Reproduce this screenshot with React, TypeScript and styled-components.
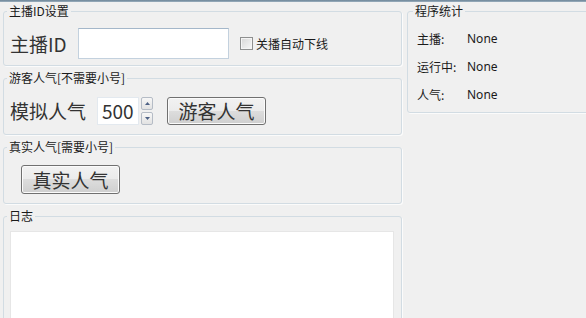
import React from 'react';
import styled, { createGlobalStyle } from 'styled-components';

const GlobalStyle = createGlobalStyle`
  html, body {
    margin: 0;
    padding: 0;
    background: #f0f0f0;
    overflow: hidden;
  }
  body {
    font-family: "Noto Sans CJK SC", "Noto Sans", sans-serif;
    color: #1e1e1e;
  }
`;

export default function App() {
  return (
    <Window>
      <GlobalStyle />
      <TitleStrip />
      <Body>
        <LeftColumn>
          <Group $h={63}>
            <Legend>主播ID设置</Legend>
            <Row $pt={9}>
              <BigLabel $w={68}>主播ID</BigLabel>
              <TextInput defaultValue="" />
              <CheckLabel>
                <CheckBox />
                关播自动下线
              </CheckLabel>
            </Row>
          </Group>

          <Group $h={65}>
            <Legend>游客人气[不需要小号]</Legend>
            <Row $pt={11}>
              <BigLabel $w={87}>模拟人气</BigLabel>
              <SpinBox>500</SpinBox>
              <SpinArrows>
                <SpinButton>
                  <svg width="5" height="3" viewBox="0 0 5 3">
                    <path d="M0 3 L2.5 0 L5 3 Z" fill="#4d6185" />
                  </svg>
                </SpinButton>
                <SpinButton>
                  <svg width="5" height="3" viewBox="0 0 5 3">
                    <path d="M0 0 L5 0 L2.5 3 Z" fill="#4d6185" />
                  </svg>
                </SpinButton>
              </SpinArrows>
              <Button $ml={14} $h={28}>游客人气</Button>
            </Row>
          </Group>

          <Group $h={65}>
            <Legend>真实人气[需要小号]</Legend>
            <Row $pt={10}>
              <Button $ml={11} $h={29}>真实人气</Button>
            </Row>
          </Group>

          <Group $h={130}>
            <Legend>日志</Legend>
            <LogArea />
          </Group>
        </LeftColumn>

        <RightColumn>
          <Group $h={110}>
            <Legend $ml={-1}>程序统计</Legend>
            <Stats>
              <StatRow>
                <StatLabel>主播:</StatLabel>
                <StatValue>None</StatValue>
              </StatRow>
              <StatRow>
                <StatLabel>运行中:</StatLabel>
                <StatValue>None</StatValue>
              </StatRow>
              <StatRow>
                <StatLabel>人气:</StatLabel>
                <StatValue>None</StatValue>
              </StatRow>
            </Stats>
          </Group>
        </RightColumn>
      </Body>
    </Window>
  );
}

const Window = styled.div`
  width: 592px;
  height: 318px;
  overflow: hidden;
  display: flex;
  flex-direction: column;
  background: #f0f0f0;
`;

const TitleStrip = styled.div`
  height: 2px;
  flex-shrink: 0;
  background: linear-gradient(#6b8396, #9cb0bf);
`;

const Body = styled.div`
  display: flex;
  gap: 5px;
  padding: 1px 0 0 3px;
  flex: 1;
  min-height: 0;
`;

const LeftColumn = styled.div`
  width: 399px;
  flex-shrink: 0;
  display: flex;
  flex-direction: column;
  gap: 4px;
`;

const RightColumn = styled.div`
  flex: 1;
  display: flex;
  flex-direction: column;
`;

const Group = styled.fieldset<{ $h: number }>`
  margin: 0;
  padding: 0 6px;
  min-width: 0;
  height: ${p => p.$h}px;
  flex-shrink: 0;
  box-sizing: border-box;
  border: 1px solid #d2dce3;
  border-radius: 3px;
  box-shadow: 1px 1px 0 #fbfbfb;
`;

const Legend = styled.legend<{ $ml?: number }>`
  margin-left: ${p => p.$ml ?? -3}px;
  padding: 0 2px;
  font-size: 12px;
  line-height: 16px;
  color: #1a1a1a;
`;

const Row = styled.div<{ $pt: number }>`
  display: flex;
  align-items: center;
  padding-top: ${p => p.$pt}px;
`;

const BigLabel = styled.span<{ $w: number }>`
  width: ${p => p.$w}px;
  flex-shrink: 0;
  font-size: 19px;
  line-height: 24px;
  color: #333;
`;

const TextInput = styled.input`
  width: 151px;
  height: 31px;
  box-sizing: border-box;
  margin: 0;
  padding: 0 4px;
  background: #fff;
  border: 1px solid #c3d1de;
  border-top-color: #a4b7ca;
  outline: none;
  font-size: 14px;
`;

const CheckLabel = styled.label`
  display: flex;
  align-items: center;
  gap: 3px;
  margin-left: 11px;
  font-size: 12px;
  line-height: 16px;
  color: #1a1a1a;
`;

const CheckBox = styled.span`
  width: 13px;
  height: 13px;
  box-sizing: border-box;
  border: 1px solid #8e8f8f;
  background: linear-gradient(135deg, #d6d6d6, #f7f7f7);
  box-shadow: inset 0 0 0 1px #f4f4f4;
`;

const SpinBox = styled.div`
  width: 42px;
  height: 28px;
  box-sizing: border-box;
  padding-left: 4px;
  background: #fff;
  border: 1px solid #e3e9ef;
  font-size: 19px;
  line-height: 26px;
  color: #333;
`;

const SpinArrows = styled.div`
  display: flex;
  flex-direction: column;
  gap: 2px;
  margin-left: 2px;
`;

const SpinButton = styled.div`
  width: 12px;
  height: 13px;
  box-sizing: border-box;
  display: flex;
  align-items: center;
  justify-content: center;
  border: 1px solid #b5bcc6;
  border-radius: 2px;
  background: linear-gradient(#f7f7f7, #e2e2e2);
`;

const Button = styled.button<{ $ml: number; $h: number }>`
  margin: 0 0 0 ${p => p.$ml}px;
  width: 99px;
  height: ${p => p.$h}px;
  box-sizing: border-box;
  padding: 0;
  border: 1px solid #707070;
  border-radius: 3px;
  background: linear-gradient(#f2f2f2 0%, #ebebeb 50%, #dddddd 50%, #cfcfcf 100%);
  box-shadow: inset 0 0 0 1px #fbfbfb;
  font-family: "Noto Sans CJK SC", sans-serif;
  font-size: 19px;
  line-height: 24px;
  color: #333;
`;

const LogArea = styled.div`
  margin-top: 7px;
  margin-right: 1px;
  height: 110px;
  background: #fff;
  border: 1px solid #e6e6e6;
`;

const Stats = styled.div`
  display: flex;
  flex-direction: column;
  padding: 5px 0 0 3px;
`;

const StatRow = styled.div`
  display: flex;
  align-items: center;
  height: 28px;
  font-size: 12px;
`;

const StatLabel = styled.span`
  width: 50px;
  color: #1a1a1a;
`;

const StatValue = styled.span`
  font-family: "Noto Sans", sans-serif;
  color: #1a1a1a;
`;
